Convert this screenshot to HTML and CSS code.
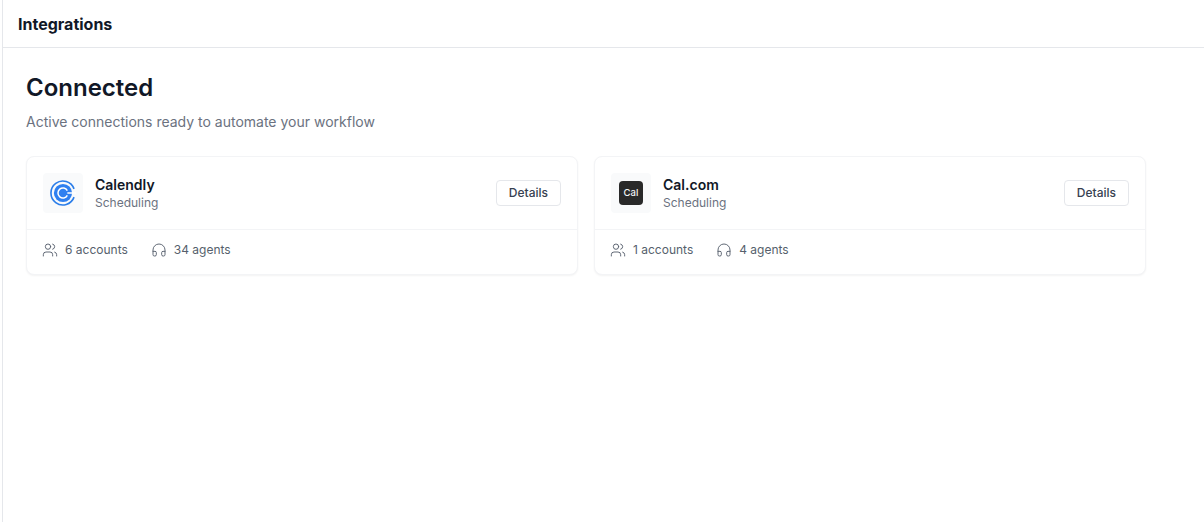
FILE: index.html
```html
<!doctype html>
<html lang="en">
<head>
    <meta charset="UTF-8">
    <meta name="viewport" content="width=device-width, initial-scale=1.0">
    <title>Integrations</title>
    <link rel="stylesheet" href="styles.css">
</head>
<body>
<div class="page">
    <header class="topbar">
        <h1 class="topbar-title">Integrations</h1>
    </header>

    <main class="content">
        <h2 class="section-title">Connected</h2>
        <p class="section-sub">Active connections ready to automate your workflow</p>

        <div class="cards">
            <section class="card">
                <div class="card-top">
                    <div class="logo">
                        <svg width="26" height="26" viewBox="0 0 24 24" fill="none">
                            <path d="M22.2 8.2A11 11 0 1 0 22.2 15.8" stroke="#2a7de9" stroke-width="1.5"/>
                            <circle cx="12" cy="12" r="8.4" fill="#2f80f0"/>
                            <path d="M16 9.8A4.6 4.6 0 1 0 16 14.2" stroke="#fff" stroke-width="1.4"/>
                            <path d="M16 12H24" stroke="#fff" stroke-width="1.4"/>
                        </svg>
                    </div>
                    <div class="info">
                        <div class="name">Calendly</div>
                        <div class="category">Scheduling</div>
                    </div>
                    <button class="details-btn" type="button">Details</button>
                </div>
                <div class="card-stats">
                    <span class="stat">
                        <svg class="stat-icon" viewBox="0 0 24 24"><path d="M16 21v-2a4 4 0 0 0-4-4H6a4 4 0 0 0-4 4v2"/><circle cx="9" cy="7" r="4"/><path d="M22 21v-2a4 4 0 0 0-3-3.87"/><path d="M16 3.13a4 4 0 0 1 0 7.75"/></svg>
                        6 accounts
                    </span>
                    <span class="stat">
                        <svg class="stat-icon" viewBox="0 0 24 24"><path d="M3 14h3a2 2 0 0 1 2 2v3a2 2 0 0 1-2 2H5a2 2 0 0 1-2-2v-7a9 9 0 0 1 18 0v7a2 2 0 0 1-2 2h-1a2 2 0 0 1-2-2v-3a2 2 0 0 1 2-2h3"/></svg>
                        34 agents
                    </span>
                </div>
            </section>

            <section class="card">
                <div class="card-top">
                    <div class="logo">
                        <div class="cal-mark">Cal</div>
                    </div>
                    <div class="info">
                        <div class="name">Cal.com</div>
                        <div class="category">Scheduling</div>
                    </div>
                    <button class="details-btn" type="button">Details</button>
                </div>
                <div class="card-stats">
                    <span class="stat">
                        <svg class="stat-icon" viewBox="0 0 24 24"><path d="M16 21v-2a4 4 0 0 0-4-4H6a4 4 0 0 0-4 4v2"/><circle cx="9" cy="7" r="4"/><path d="M22 21v-2a4 4 0 0 0-3-3.87"/><path d="M16 3.13a4 4 0 0 1 0 7.75"/></svg>
                        1 accounts
                    </span>
                    <span class="stat">
                        <svg class="stat-icon" viewBox="0 0 24 24"><path d="M3 14h3a2 2 0 0 1 2 2v3a2 2 0 0 1-2 2H5a2 2 0 0 1-2-2v-7a9 9 0 0 1 18 0v7a2 2 0 0 1-2 2h-1a2 2 0 0 1-2-2v-3a2 2 0 0 1 2-2h3"/></svg>
                        4 agents
                    </span>
                </div>
            </section>
        </div>
    </main>
</div>
</body>
</html>
```

FILE: styles.css
```css
* {
    box-sizing: border-box;
}

html, body {
    height: 100%;
}

body {
    margin: 0;
    padding-left: 2px;
    background: #fff;
    font-family: Inter, "Liberation Sans", sans-serif;
    color: #111827;
}

.page {
    min-height: 100%;
    border-left: 1px solid #e5e7eb;
}

.topbar {
    display: flex;
    align-items: center;
    height: 48px;
    padding-left: 15px;
    border-bottom: 1px solid #e5e7eb;
}

.topbar-title {
    margin: 0;
    font-size: 16px;
    font-weight: 700;
    line-height: 24px;
}

.content {
    padding: 24px 58px 0 23px;
}

.section-title {
    margin: 0;
    font-size: 24px;
    font-weight: 600;
    line-height: 32px;
}

.section-sub {
    margin: 8px 0 0;
    font-size: 14px;
    line-height: 20px;
    color: #6b7280;
}

.cards {
    display: grid;
    grid-template-columns: 1fr 1fr;
    gap: 16px;
    margin-top: 24px;
}

.card {
    border: 1px solid #f3f4f6;
    border-radius: 8px;
    background: #fff;
    box-shadow: 0 1px 2px rgba(0, 0, 0, .05);
}

.card-top {
    display: flex;
    align-items: center;
    gap: 12px;
    height: 73px;
    padding: 0 16px;
    border-bottom: 1px solid #f3f4f6;
}

.logo {
    display: flex;
    align-items: center;
    justify-content: center;
    flex: none;
    width: 40px;
    height: 40px;
    border-radius: 4px;
    background: #f9fafb;
}

.cal-mark {
    width: 24px;
    height: 24px;
    border-radius: 4px;
    background: #292929;
    color: #f3f4f6;
    font-size: 9.5px;
    font-weight: 500;
    line-height: 24px;
    text-align: center;
}

.info {
    flex: 1;
    min-width: 0;
}

.name {
    font-size: 14px;
    font-weight: 600;
    line-height: 20px;
}

.category {
    font-size: 12px;
    line-height: 16px;
    color: #6b7280;
}

.details-btn {
    flex: none;
    height: 26px;
    padding: 0 12px 2px;
    border: 1px solid #e5e7eb;
    border-radius: 4px;
    background: #fff;
    font-family: inherit;
    font-size: 12px;
    font-weight: 500;
    color: #374151;
}

.card-stats {
    display: flex;
    align-items: center;
    gap: 24px;
    height: 40px;
    margin-bottom: 4px;
    padding: 0 16px;
}

.stat {
    display: flex;
    align-items: center;
    gap: 7px;
    font-size: 12px;
    line-height: 16px;
    color: #565f6d;
}

.stat-icon {
    width: 16px;
    height: 16px;
    margin-left: -1px;
    fill: none;
    stroke: #565f6d;
    stroke-width: 1.4;
    stroke-linecap: round;
    stroke-linejoin: round;
}
```
